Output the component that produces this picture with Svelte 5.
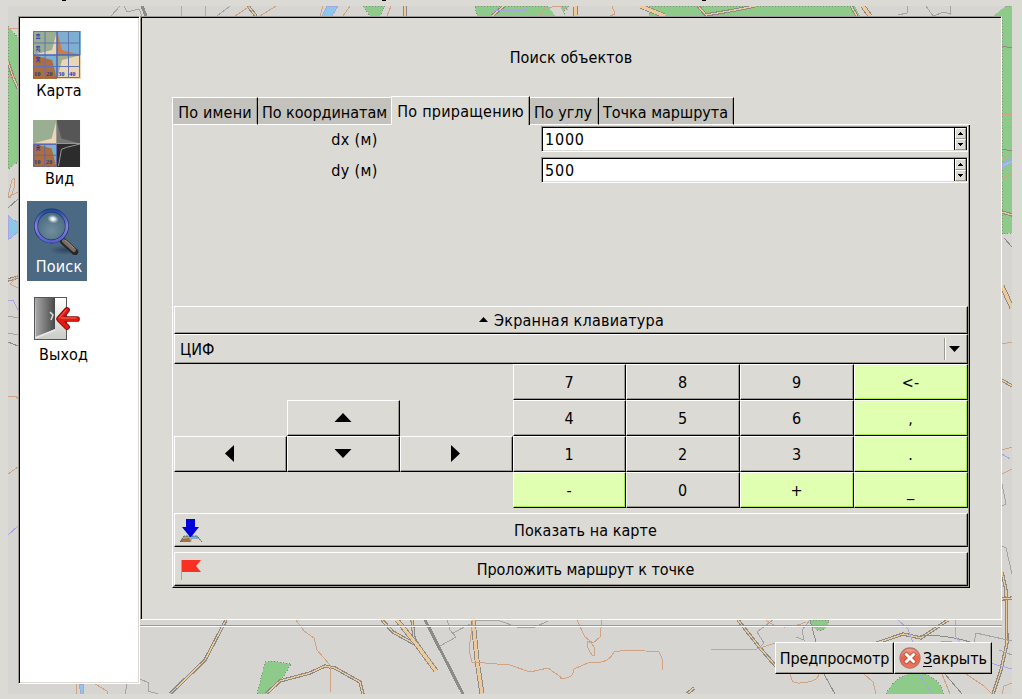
<script>
  let dx = $state('1000');
  let dy = $state('500');
  let active = $state(2);
  let section = $state('search');

  const sections = [
    { id: 'map', label: 'Карта' },
    { id: 'view', label: 'Вид' },
    { id: 'search', label: 'Поиск' },
    { id: 'exit', label: 'Выход' }
  ];

  const tabs = [
    { label: 'По имени', w: 86 },
    { label: 'По координатам', w: 133 },
    { label: 'По приращению', w: 139 },
    { label: 'По углу', w: 69 },
    { label: 'Точка маршрута', w: 135 }
  ];

  const keys = [
    '', '', '', '7', '8', '9', '<-',
    '', 'up', '', '4', '5', '6', ',',
    'left', 'down', 'right', '1', '2', '3', '.',
    '', '', '', '-', '0', '+', '_'
  ];
  const arrows = {
    up: '8,8 16.5,17 -.5,17',
    down: '-.5,8 16.5,8 8,17',
    left: '3,12.5 12,4 12,21',
    right: '3,4 12,12.5 3,21'
  };
  const accent = ['<-', ',', '.', '-', '+', '_'];

  // Map lines: [path, kind]
  const roads = [
    ['M226 620L205 660L170 694', 'road'],
    ['M382 620L393 632L420 647', 'road'],
    ['M412 620L414 638L418 645', 'road'],
    ['M397 620L417 645L436 671', 'main'],
    ['M425 620L443 655L463 694', 'rail'],
    ['M473 620L477 660L482 694', 'main'],
    ['M266 694L280 681L310 673L325 666L335 668L360 682L363 694', 'road'],
    ['M738 620L760 648L780 671', 'road'],
    ['M877 643L903 634L921 638L948 620', 'road'],
    ['M1002 572L1006 590L1007 643L1001 670L993 694', 'road'],
    ['M1002 599L1012 598', 'road'],
    ['M687 694L694 688', 'road'],
    ['M8 62L13 77L18 88', 'road'],
    ['M248 6L256 16', 'road'],
    ['M405 6L405 16', 'road'],
    ['M504 6L492 16', 'road'],
    ['M575 6L576 16', 'main'],
    ['M640 6L665 16', 'main'],
    ['M698 6L706 15L735 10L755 6', 'road'],
    ['M851 6L857 16', 'road'],
    ['M863 6L870 16', 'main'],
    ['M1002 212L1012 215', 'road'],
    ['M1002 286L1012 308', 'main'],
    ['M1002 380L1012 386', 'road'],
    ['M8 280L18 277', 'road'],
    ['M142 6L146 16', 'rail'],
    ['M296 620L304 631L314 638L317 650L330 665V692', 'path'],
    ['M473 620L469 650L472 662L510 665L530 672L548 668L562 678', 'path'],
    ['M577 620L585 637L593 643L600 637L602 620', 'path'],
    ['M560 678Q573 680 574 669L590 662Q608 665 614 652Q625 649 659 652Q665 662 662 670', 'path'],
    ['M592 655Q585 645 588 641Q596 645 595 655Z', 'path'],
    ['M711 649L757 649L775 643', 'path'],
    ['M766 620Q780 633 806 622', 'path'],
    ['M791 674Q790 684 800 683Q820 682 819 672', 'path'],
    ['M864 674L873 682L876 694', 'path'],
    ['M942 674L950 694M966 674L984 686L992 694M1002 694L1004 686L1012 683', 'path'],
    ['M76 684V694M95 684L107 691V694', 'path'],
    ['M205 6V16M250 6L235 16M276 6L260 16M323 6L320 16M350 6L343 16M391 6L387 16M540 16L545 8L560 6L568 10M612 6L615 14L610 16', 'path'],
    ['M8 28H18M8 76H18M8 196L12 180Q16 175 14 188Q10 202 8 196', 'path'],
    ['M8 197L18 192M18 275L10 284L18 288M8 396H16L18 399M8 474L18 467M1002 114H1012M1002 127H1012M1002 159L1012 153M1002 180L1012 173M1002 344L1012 342M1002 450L1012 447M1002 474L1012 469', 'path'],
    ['M120 6L111 16M124 6L127 12L139 9L142 16M230 6L217 16M898 15L907 13V6M926 6L933 16L944 12L950 14V6', 'minor'],
    ['M8 316L18 318M8 333L18 335M1002 484L1006 504L1002 506M1002 546L1006 548L1012 574', 'minor'],
    ['M447 620L450 630L456 637L440 646M453 633L470 624M475 620H497L520 628L535 627L548 621', 'minor'],
    ['M140 679L149 683L148 691L158 694M127 684L125 694', 'minor'],
    ['M773 620L757 632L764 643L758 649M796 637L804 640L802 630L810 620M941 641L974 644L976 633L1012 641M999 650L1012 655', 'minor'],
    ['M810 620L816 642M824 674L835 694M920 636Q945 634 970 642M945 674L962 694M8 208L18 199M8 342L18 346', 'dark'],
    ['M1002 46L1012 48M1002 149L1012 151M1004 238L1012 247', 'dark'],
    ['M181 6L182 16M493 10L525 11L528 6M1002 119H1012M1002 164L1012 156M1002 454L1010 459', 'water'],
    ['M8 300L13 300L18 310M8 535L18 526M18 509V513M898 620L908 629L912 640V643M955 620V636L960 642M990 663L1012 669M919 674L932 694', 'water']
  ];
</script>

{#snippet chart(gray)}
  <rect x="0" y="0" width="24" height="24" fill="#9aaf91" />
  <rect x="24" y="0" width="24" height="24" fill={gray ? '#565656' : '#7eaed0'} />
  <rect x="0" y="24" width="24" height="24" fill="#7eaed0" />
  <rect x="24" y="24" width="24" height="24" fill={gray ? '#2c2c2c' : '#9aaf91'} />
  <path d="M0 24L19 19L24 0V24Z" fill="#ead6b7" />
  <path d="M24 0L29 19L48 24H24Z" fill={gray ? '#777' : '#ca7d4a'} />
  <path d="M0 24L19 29L24 48H0Z" fill="#ac6e3e" />
  {#if gray}
    <path d="M26 47L29 30L34 28L48 24.500" fill="none" stroke="#9a9a9a" />
    <path d="M0 24H48" stroke="#999" />
    <path d="M1 25H24V47H1ZM12 25V47M1 36H24" fill="none" stroke="#5e65ad" />
  {:else}
    <path d="M24 48L29 29L48 24V48Z" fill="#ead6b7" />
    <path d="M.5.5H46.500V46.500H.5ZM12 0V47M35.500 0V47M0 12H47M0 35.500H47" fill="none" stroke="#6073b4" />
    <path d="M24 0V47M0 24H47" fill="none" stroke="#4a66bb" stroke-width="1.500" />
  {/if}
  <g class="ticks">
    <text x="1" y="45">10</text><text x="13" y="45">20</text>
    <text transform="translate(7 32) rotate(-90)">30</text>
    {#if !gray}
      <text x="25" y="45">30</text><text x="36" y="45">40</text>
      <text transform="translate(7 21) rotate(-90)">20</text>
      <text transform="translate(7 9) rotate(-90)">10</text>
    {/if}
  </g>
{/snippet}

{#snippet steps()}
  <div class="steps">
    <button aria-label="+"><svg width="5" height="3"><path d="M2 0H3V1H4V2H5V3H0V2H1V1H2Z" /></svg></button>
    <button aria-label="-"><svg width="5" height="3"><path d="M0 0H5V1H4V2H3V3H2V2H1V1H0Z" /></svg></button>
  </div>
{/snippet}

<div class="window">
  <svg class="backdrop" viewBox="8 6 1004 688" width="1004" height="688" aria-hidden="true">
    <path class="wood" d="M8 26L18 38V162L8 169ZM363 6H385L380 16H370ZM475 6H570L564 10L565 16H477ZM649 6H1012V233L1002 234V16H649ZM265 662L273 661L291 664L280 682L266 694H257ZM810 620H829Q828 630 820 631Q811 629 810 620ZM886 694Q896 674 915 673Q938 674 944 694Z" />
    <path class="clear" d="M548 6L555 16H565L560 6ZM855 6L860 16H993L1006 6Z" />
    <path class="lake" d="M327 6H338L332 16H322ZM8 215L13 220L18 222V232L8 240ZM79 684H83L84 694H81ZM1002 164V168L1012 163V160Z" />
    {#each roads as [d, kind]}
      <path class={kind} {d} />
      {#if kind === 'road' || kind === 'main'}<path class="{kind}-in" {d} />{/if}
    {/each}
  </svg>
  <div class="title-marks"><i></i><i></i><i></i></div>

  <nav class="sidebar">
    {#each sections as s}
      <button class="nav-item nav-{s.id}" class:selected={section === s.id} onclick={() => (section = s.id)}>
        <svg width="48" height="48" viewBox="0 0 48 48">
          {#if s.id === 'map'}
            <path d="M2 2H48V48H2Z" fill="#bfc0cb" />
            <g>{@render chart(false)}</g>
          {:else if s.id === 'view'}
            <g transform="translate(0 1) scale(.98)">{@render chart(true)}</g>
          {:else if s.id === 'search'}
            <defs>
              <radialGradient id="lens" cx=".5" cy=".65"><stop offset="0" stop-color="#718e9c" /><stop offset="1" stop-color="#4e6e84" /></radialGradient>
              <radialGradient id="shine"><stop offset="0" stop-color="#fff" /><stop offset=".35" stop-color="#dce5e9" /><stop offset="1" stop-color="#9db0bb" stop-opacity="0" /></radialGradient>
              <linearGradient id="rim" x1="0" y1="0" x2="0" y2="1"><stop offset="0" stop-color="#1f4c9c" /><stop offset=".5" stop-color="#8e82dc" /><stop offset="1" stop-color="#5a60c8" /></linearGradient>
              <radialGradient id="shade"><stop offset="0" stop-color="#253b4d" stop-opacity=".75" /><stop offset="1" stop-color="#253b4d" stop-opacity="0" /></radialGradient>
            </defs>
            <ellipse cx="32" cy="43" rx="16" ry="5" fill="url(#shade)" />
            <path d="M30 34L42 45" stroke="#292725" stroke-width="6.500" stroke-linecap="round" />
            <path d="M31 34L41 43" stroke="#7c6d62" stroke-width="4" stroke-linecap="round" />
            <path d="M32 33L41 41" stroke="#a29588" stroke-width="1" />
            <circle cx="18.500" cy="19" r="15.500" fill="url(#lens)" stroke="#182e72" stroke-width="4" />
            <circle cx="18.500" cy="19" r="15.500" fill="none" stroke="url(#rim)" stroke-width="2.700" />
            <ellipse cx="20" cy="12" rx="6" ry="4.500" fill="url(#shine)" transform="rotate(15 20 12)" />
          {:else}
            <defs>
              <linearGradient id="door"><stop offset="0" stop-color="#aaa" /><stop offset="1" stop-color="#484848" /></linearGradient>
              <linearGradient id="frame" x1="0" y1="0" x2="0" y2="1"><stop offset="0" stop-color="#fff" /><stop offset="1" stop-color="#c8cbc5" /></linearGradient>
            </defs>
            <rect x="1.500" y="2.500" width="32" height="42" fill="url(#frame)" stroke="#555753" />
            <path d="M2 3H22V34L3 43Z" fill="url(#door)" />
            <path d="M2 44V42L22 34V36Z" fill="#e7e7e7" />
            <path d="M17 17L20 20L18 25" fill="none" stroke="#ddd" stroke-width="1.500" />
            <path d="M44 24H28M34 15L26 24L34 32" fill="none" stroke="#8e0000" stroke-width="5.700" stroke-linecap="round" stroke-linejoin="round" />
            <path d="M44 24H28M34 15L26 24L34 32" fill="none" stroke="#e01b14" stroke-width="3.900" stroke-linecap="round" stroke-linejoin="round" />
            <path d="M43 23H28M33 15L26 23" fill="none" stroke="#f6695d" stroke-width="1" stroke-linecap="round" />
          {/if}
        </svg>
        <span>{s.label}</span>
      </button>
    {/each}
  </nav>

  <div class="right">
    <main class="page">
      <h1>Поиск объектов</h1>
      <div class="tabs" role="tablist">
        {#each tabs as t, i}
          <button role="tab" aria-selected={active === i} class="tab t{i}" class:active={active === i} style:width="{t.w}px" onclick={() => (active = i)}>{t.label}</button>
        {/each}
        <div class="rest"></div>
      </div>
      <section class="pane">
        <div class="form">
          <label for="dx">dx (м)</label>
          <div class="spin"><input id="dx" bind:value={dx} />{@render steps()}</div>
          <label for="dy">dy (м)</label>
          <div class="spin"><input id="dy" bind:value={dy} />{@render steps()}</div>
        </div>

        <button class="btn toggle">
          <svg width="9" height="5"><path d="M4.500 0L9 5H0Z" /></svg>
          <span>Экранная клавиатура</span>
        </button>
        <div class="btn combo">
          <span>ЦИФ</span>
          <div class="drop"><svg width="11" height="6"><path d="M0 0H11L5.500 6Z" /></svg></div>
        </div>
        <div class="keys">
          {#each keys as k}
            {#if !k}
              <span></span>
            {:else if arrows[k]}
              <button class="btn key" aria-label={k}><svg width="17" height="27" viewBox="0 0 17 27"><polygon points={arrows[k]} /></svg></button>
            {:else}
              <button class="btn key text" class:accent={accent.includes(k)}>{k}</button>
            {/if}
          {/each}
        </div>
        <button class="btn action">
          <svg class="lead" width="24" height="24" viewBox="0 0 24 24">
            <path d="M4 17H17L22 23H0Z" fill="#9aaf91" /><path d="M11 17H17L20 20L11 21Z" fill="#7eaed0" />
            <path d="M2 20L9 19L11 23H0Z" fill="#a96c40" /><path d="M11 23L12 20L19 20L22 23Z" fill="#ead6b7" />
            <path d="M0 23L4 17H17L22 23" fill="none" stroke="#3c3c35" stroke-width=".8" stroke-dasharray="2 1" />
            <path d="M6 0H15V8H19L11 18H10L2 8H6Z" fill="#0000db" />
          </svg>
          <span class="show">Показать на карте</span>
        </button>
        <button class="btn action">
          <svg class="lead" width="24" height="24" viewBox="0 0 24 24">
            <path d="M1 2H21L16 8L21 14H1Z" fill="#fa3020" /><path d="M1.500 2V22" stroke="#f58277" />
          </svg>
          <span class="route">Проложить маршрут к точке</span>
        </button>
      </section>
    </main>
    <div class="divider"></div>
    <footer>
      <button class="btn preview text">Предпросмотр</button>
      <button class="btn close">
        <svg width="22" height="22" viewBox="0 0 22 22">
          <defs><linearGradient id="ball" x1="0" y1="0" x2="0" y2="1"><stop offset="0" stop-color="#f6a392" /><stop offset=".5" stop-color="#e95f48" /><stop offset="1" stop-color="#f07b61" /></linearGradient></defs>
          <circle cx="11" cy="11" r="10" fill="url(#ball)" stroke="#b8766b" stroke-width="1.300" />
          <path d="M7.500 7.500L14.500 14.500M14.500 7.500L7.500 14.500" stroke="#b7412e" stroke-width="4.400" stroke-linecap="square" />
          <path d="M7.500 7.500L14.500 14.500M14.500 7.500L7.500 14.500" stroke="#fff" stroke-width="3" stroke-linecap="square" />
        </svg>
        <span><u>З</u>акрыть</span>
      </button>
    </footer>
  </div>
</div>

<style>
  :global(body) { margin: 0; background: #dbdad5; overflow: hidden; }
  .window, .window button, .window input {
    font-family: "DejaVu Sans Condensed", "DejaVu Sans", sans-serif;
    font-stretch: condensed;
    font-size: 16px;
    line-height: 20px;
    color: #000;
  }
  .window {
    position: relative;
    box-sizing: border-box;
    width: 1022px;
    height: 699px;
    padding: 16px 20px 0 18px;
    display: flex;
    background: #dbdad5;
  }
  button { box-sizing: border-box; margin: 0; padding: 0; border: 0; background: none; }
  .backdrop { position: absolute; left: 8px; top: 6px; background: #d6d5d1; shape-rendering: crispEdges; }
  .backdrop path { fill: none; }
  .backdrop .wood { fill: #8ecb8a; stroke: #8c8c86; stroke-dasharray: 1 2; }
  .backdrop .clear { fill: #d6d5d1; }
  .backdrop .lake { fill: #8cc9e8; stroke: #a9a4e5; }
  .backdrop .road { stroke: #8c8a84; stroke-width: 3.4; }
  .backdrop .road-in { stroke: #ecca9b; stroke-width: 1.2; }
  .backdrop .main { stroke: #8c8a84; stroke-width: 5; }
  .backdrop .main-in { stroke: #ecca9b; stroke-width: 3.2; }
  .backdrop .rail { stroke: #8c8b87; stroke-width: 3; }
  .backdrop .path { stroke: #d2a382; }
  .backdrop .minor { stroke: #a5a4a0; }
  .backdrop .dark { stroke: #8c8b85; }
  .backdrop .water { stroke: #a9a4e5; }
  .title-marks { position: absolute; top: 0; left: 62px; display: flex; gap: 316px; }
  .title-marks i { width: 4px; height: 1px; background: #000; }

  .sidebar {
    position: relative;
    box-sizing: border-box;
    width: 122px;
    height: 668px;
    padding: 8px 0 0 8px;
    display: flex;
    flex-direction: column;
    gap: 8px;
    background: #fff;
    border: 1px solid;
    border-color: #9c9a90 #fff #fff #9c9a90;
    box-shadow: inset 1px 1px #000, inset -1px -1px #dbdad5;
  }
  .nav-item {
    width: 60px;
    height: 80px;
    padding-top: 6px;
    display: flex;
    flex-direction: column;
    align-items: center;
  }
  .nav-item span { margin: 2px 0 0 4px; white-space: nowrap; }
  .nav-item.nav-exit span { margin-left: 13px; letter-spacing: .15px; }
  .nav-item.nav-view span { margin-left: 5px; }
  .nav-item.selected { background: #4c6983; }
  .nav-item.selected span { color: #fff; letter-spacing: .2px; }
  .ticks text { font: bold 6.5px "Liberation Serif", serif; fill: #2434b4; }

  .right { position: relative; width: 862px; display: flex; flex-direction: column; }
  .page {
    box-sizing: border-box;
    height: 604px;
    padding: 31px 31px 0;
    background: #dbdad5;
    border: 1px solid;
    border-color: #9c9a90 #fff #fff #9c9a90;
    box-shadow: inset 1px 1px #000;
  }
  h1 { margin: 0; height: 48px; font: inherit; letter-spacing: .1px; text-align: center; }
  .tabs { height: 29px; display: flex; align-items: flex-end; }
  .tab {
    height: 28px;
    padding-top: 3px;
    text-align: center;
    white-space: nowrap;
    background: #c3c2bc;
    border-top: 1px solid #fff;
    border-bottom: 1px solid #fff;
    border-right: 1px solid #000;
    box-shadow: inset -1px 0 #9c9a90;
  }
  .tab:first-child { border-left: 1px solid #fff; }
  .tab.t0 { padding-right: 0; letter-spacing: .2px; }
  .tab.t1 { border-right: 0; box-shadow: none; }
  .tab.t3 { padding-right: 2px; }
  .tab.t4 { padding-right: 1px; }
  .tab.active { height: 29px; padding: 1px 0 0; letter-spacing: .25px; background: #dbdad5; border-bottom: 0; border-left: 1px solid #fff; }
  .rest { flex: 1; border-bottom: 1px solid #fff; }
  .pane {
    box-sizing: border-box;
    width: 798px;
    height: 463px;
    padding: 1px 0 0 1px;
    border: solid;
    border-width: 0 1px 1px;
    border-color: #fff #000 #000 #fff;
    box-shadow: inset -1px -1px #9c9a90;
  }
  .form { display: grid; grid-template-columns: 361px 427px; column-gap: 6px; row-gap: 5px; height: 180px; align-content: start; }
  .form label { text-align: center; line-height: 28px; height: 26px; letter-spacing: .35px; }
  .spin {
    box-sizing: border-box;
    height: 26px;
    width: 427px;
    padding: 1px 0 1px 1px;
    display: flex;
    border: 1px solid;
    border-color: #9c9a90 #fff #fff #9c9a90;
    background: #fff;
    box-shadow: inset 1px 1px #000, inset 0 -1px #dbdad5;
  }
  .spin input { flex: 1; min-width: 0; padding: 2px 0 0 2px; border: 0; background: none; outline: 0; letter-spacing: .8px; }
  .steps { box-sizing: border-box; width: 13px; border: solid #000; border-width: 0 1px; display: flex; flex-direction: column; }
  .steps button { height: 11px; display: grid; place-items: center; background: #dbdad5; border: 1px solid; border-color: #fff #9c9a90 #9c9a90 #fff; }

  .btn {
    background: #dbdad5;
    border: 1px solid;
    border-color: #fff #000 #000 #fff;
    box-shadow: inset -1px -1px #9c9a90;
    display: flex;
    align-items: center;
    justify-content: center;
    box-sizing: border-box;
    white-space: nowrap;
  }
  .btn span, .btn.text { padding-top: 2px; }
  .toggle { width: 794px; height: 28px; gap: 6px; letter-spacing: .22px; padding-left: 1px; }
  .toggle svg { margin-bottom: 1px; }
  .combo { width: 794px; height: 30px; justify-content: space-between; padding: 0 7px 0 5px; }
  .drop { display: flex; align-items: center; height: 22px; padding-left: 4px; border-left: 1px solid #9c9a90; box-shadow: inset 1px 0 #fff; }
  .keys { display: grid; grid-template-columns: repeat(4, 113px) repeat(3, 114px); grid-auto-rows: 36px; width: 794px; }
  .key svg { margin-right: 1px; overflow: visible; }
  .key.text { padding-right: 1px; }
  .key.accent { background: #e1ffb0; box-shadow: inset -1px -1px #a8e84e; }
  .action { position: relative; width: 794px; height: 34px; margin-top: 5px; }
  .action span { padding-left: 29px; }
  .show { letter-spacing: .06px; }
  .route { letter-spacing: -.09px; }
  .lead { position: absolute; left: 5px; top: 5px; }
  .divider { height: 1px; margin-top: 5px; background: #9c9a90; border-bottom: 1px solid #fff; }
  footer { display: flex; justify-content: flex-end; padding: 15px 10px 0 0; }
  footer .btn { height: 32px; }
  .preview { width: 119px; letter-spacing: -.15px; }
  .close { width: 98px; gap: 2px; }
  u { text-decoration-thickness: 1px; text-underline-offset: 2px; }
</style>
